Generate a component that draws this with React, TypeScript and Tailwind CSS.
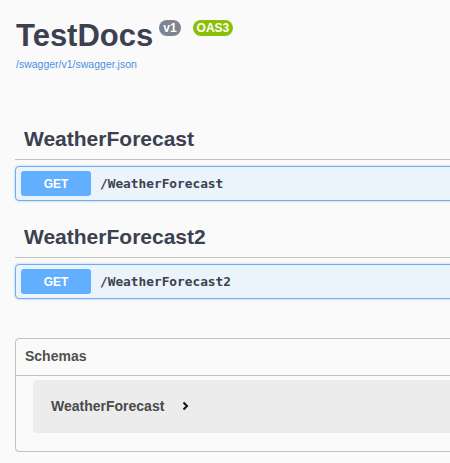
import React from "react";

const sans = { fontFamily: '"Liberation Sans", Arial, sans-serif' };

function Badge({ label, className }: { label: string; className: string }) {
  return (
    <span
      className={`inline-block h-[16px] rounded-full px-[4px] text-[12px] font-bold leading-[16px] text-white ${className}`}
    >
      {label}
    </span>
  );
}

function TagSection({ name, path, className }: { name: string; path: string; className?: string }) {
  return (
    <section className={className}>
      <h3 className="mb-[6px] border-b border-[#3b4151]/30 pt-[9px] pb-[8px] pl-[9px] text-[21px] font-bold leading-[24px] text-[#3b4151]">
        {name}
      </h3>
      <div className="flex items-center rounded-[4px] border border-[#61affe] bg-[#ebf3fb] p-[4px] pl-[5px] shadow-[0_0_3px_rgba(0,0,0,0.19)]">
        <span className="flex h-[25px] w-[70px] items-center justify-center rounded-[3px] bg-[#61affe] text-[12px] font-bold text-white">
          GET
        </span>
        <span
          className="ml-[9px] text-[12.8px] font-semibold text-[#3b4151]"
          style={{ fontFamily: '"DejaVu Sans Mono", "Liberation Mono", monospace' }}
        >
          {path}
        </span>
      </div>
    </section>
  );
}

export default function App() {
  return (
    <div className="min-h-[463px] w-full overflow-hidden bg-[#fafafa]" style={sans}>
      <div className="w-[540px] pl-[15px]">
        <div className="pl-[1px] pt-[20px]">
          <div className="flex items-start">
            <h2 className="text-[31px] font-bold leading-[31px] text-[#3b4151]">TestDocs</h2>
            <div className="ml-[6px] flex gap-[12px]">
              <Badge label="v1" className="bg-[#7d8492]" />
              <Badge label="OAS3" className="bg-[#89bf04]" />
            </div>
          </div>
          <a className="mt-[7px] block text-[10.5px] leading-[12px] text-[#4990e2]">
            /swagger/v1/swagger.json
          </a>
        </div>

        <TagSection name="WeatherForecast" path="/WeatherForecast" className="mt-[48px]" />
        <TagSection name="WeatherForecast2" path="/WeatherForecast2" className="mt-[15px]" />

        <section className="mt-[39px] rounded-[4px] border border-[#3b4151]/30">
          <h4 className="border-b border-[#3b4151]/30 pt-[9px] pb-[11px] pl-[9px] text-[14px] font-bold leading-[16px] text-[#505050]">
            Schemas
          </h4>
          <div className="mx-[17px] mt-[4px] mb-[18px] rounded-[4px] bg-[#ececec] pt-[18px] pb-[19px] pl-[18px]">
            <div className="flex items-center">
              <span className="text-[14px] font-bold leading-[16px] text-[#4a4a4a]">WeatherForecast</span>
              <svg className="ml-[18px]" width="7" height="10" viewBox="0 0 7 10" fill="none">
                <path d="M1.5 1.5 L5 5 L1.5 8.5" stroke="#111" strokeWidth="2" />
              </svg>
            </div>
          </div>
        </section>
      </div>
    </div>
  );
}
